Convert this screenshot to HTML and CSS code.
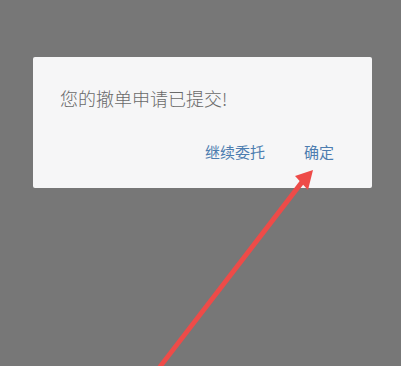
FILE: index.html
```html
<!DOCTYPE html>
<html lang="zh">
<head>
<meta charset="utf-8">
<link rel="stylesheet" href="styles.css">
</head>
<body>
<div class="dialog">
  <div class="msg">您的撤单申请已提交!</div>
  <div class="actions">
    <span class="btn">继续委托</span>
    <span class="btn">确定</span>
  </div>
</div>
<svg class="arrow" width="401" height="366" viewBox="0 0 401 366">
  <polygon points="156,368 162,368 306,181 302,178" fill="#ee4b48"/>
  <polygon points="313,170 295,176 308,190" fill="#ee4b48"/>
</svg>
</body>
</html>
```
FILE: styles.css
```css
html, body {
  margin: 0;
  padding: 0;
}
body {
  width: 401px;
  height: 366px;
  background: #777777;
  overflow: hidden;
  position: relative;
  padding-top: 57px;
  box-sizing: border-box;
  font-family: "Noto Sans CJK SC", "Noto Sans", sans-serif;
}
.dialog {
  margin-left: 33px;
  width: 339px;
  height: 131px;
  background: #f6f6f7;
  border-radius: 2px;
  box-sizing: border-box;
  padding: 29px 38px 0 27px;
  display: flex;
  flex-direction: column;
}
.msg {
  font-size: 18px;
  line-height: 24px;
  font-weight: 300;
  color: #6a6a6a;
}
.actions {
  margin-top: 32px;
  display: flex;
  justify-content: flex-end;
  gap: 39px;
}
.btn {
  font-size: 15px;
  line-height: 20px;
  color: #4d7db0;
}
.arrow {
  position: absolute;
  left: 0;
  top: 0;
}
```
